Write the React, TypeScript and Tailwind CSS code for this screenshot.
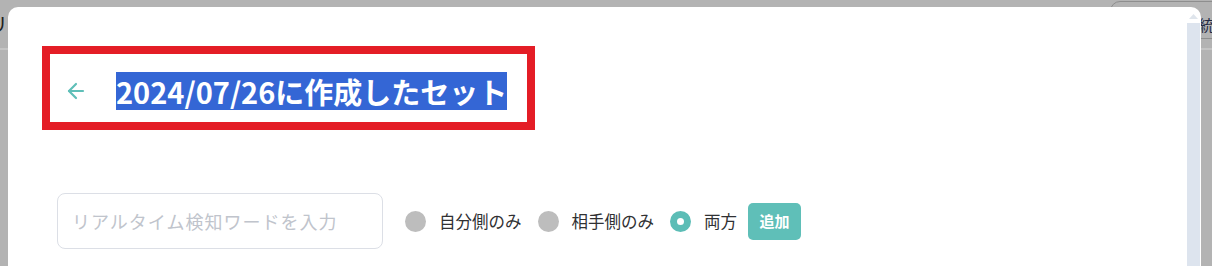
import React from "react";
import { ArrowLeft } from "lucide-react";

const jp = { fontFamily: '"Noto Sans CJK JP", "Noto Sans", sans-serif' };

function Radio({ label, checked }: { label: string; checked?: boolean }) {
  return (
    <label className="flex items-center">
      {checked ? (
        <span className="w-[21px] h-[21px] rounded-full border-[7px] border-[#5cbdb6] bg-white" />
      ) : (
        <span className="w-[21px] h-[21px] rounded-full bg-[#bdbdbd]" />
      )}
      <span className="ml-[13px] text-[16.5px] text-[#303133]">{label}</span>
    </label>
  );
}

export default function App() {
  return (
    <div className="relative w-[1212px] h-[266px] overflow-hidden bg-[#b3b3b3]" style={jp}>
      {/* page behind the dialog */}
      <div className="absolute left-0 top-0 w-full h-[50px] border-b-2 border-[#c4c4c4]">
        <span className="absolute left-[-12px] top-[10px] text-[20px] text-[#1f1f1f]">リ</span>
        <div className="absolute left-[1110px] top-[1px] w-[140px] h-[38px] rounded-[10px] border border-[#8e8e8e]">
          <span className="absolute left-[88px] top-[12px] text-[15px] text-[#1f2a44]">統計</span>
        </div>
      </div>

      {/* dialog */}
      <div className="absolute left-[8px] top-[7px] w-[1193px] h-[300px] bg-white rounded-[10px] flex">
        <div className="flex-1 flex flex-col">
          <div className="ml-[34px] mt-[39px] w-[493px] h-[84px] border-[8px] border-[#e41d26] flex items-center pt-[6px]">
            <ArrowLeft className="ml-[14px] text-[#5fbfb8]" size={24} strokeWidth={2.2} />
            <span className="ml-[28px] bg-[#3466d5] text-white text-[29px] font-bold leading-[38px]">
              2024/07/26に作成したセット
            </span>
          </div>

          <div className="flex items-center ml-[49px] mt-[63px]">
            <div className="w-[326px] h-[56px] rounded-[8px] border border-[#dcdfe6] flex items-center pl-[14px]">
              <span className="text-[18px] text-[#c0c4cc] tracking-[1px]">リアルタイム検知ワードを入力</span>
            </div>
            <div className="flex items-center ml-[22px] gap-[16px]">
              <Radio label="自分側のみ" />
              <Radio label="相手側のみ" />
              <Radio label="両方" checked />
            </div>
            <button className="ml-[11px] w-[53px] h-[37px] rounded-[5px] bg-[#5fbfb8] text-white text-[15px] font-bold">
              追加
            </button>
          </div>
        </div>

        {/* scrollbar */}
        <div className="w-[13px] mr-[1px] flex flex-col">
          <div className="h-[16px] flex items-center justify-center pt-[2px]">
            <svg width="9" height="5" viewBox="0 0 9 5">
              <polygon points="4.5,0 9,5 0,5" fill="#dfe5ec" />
            </svg>
          </div>
          <div className="flex-1 bg-[#dde4ee]" />
        </div>
      </div>
    </div>
  );
}
